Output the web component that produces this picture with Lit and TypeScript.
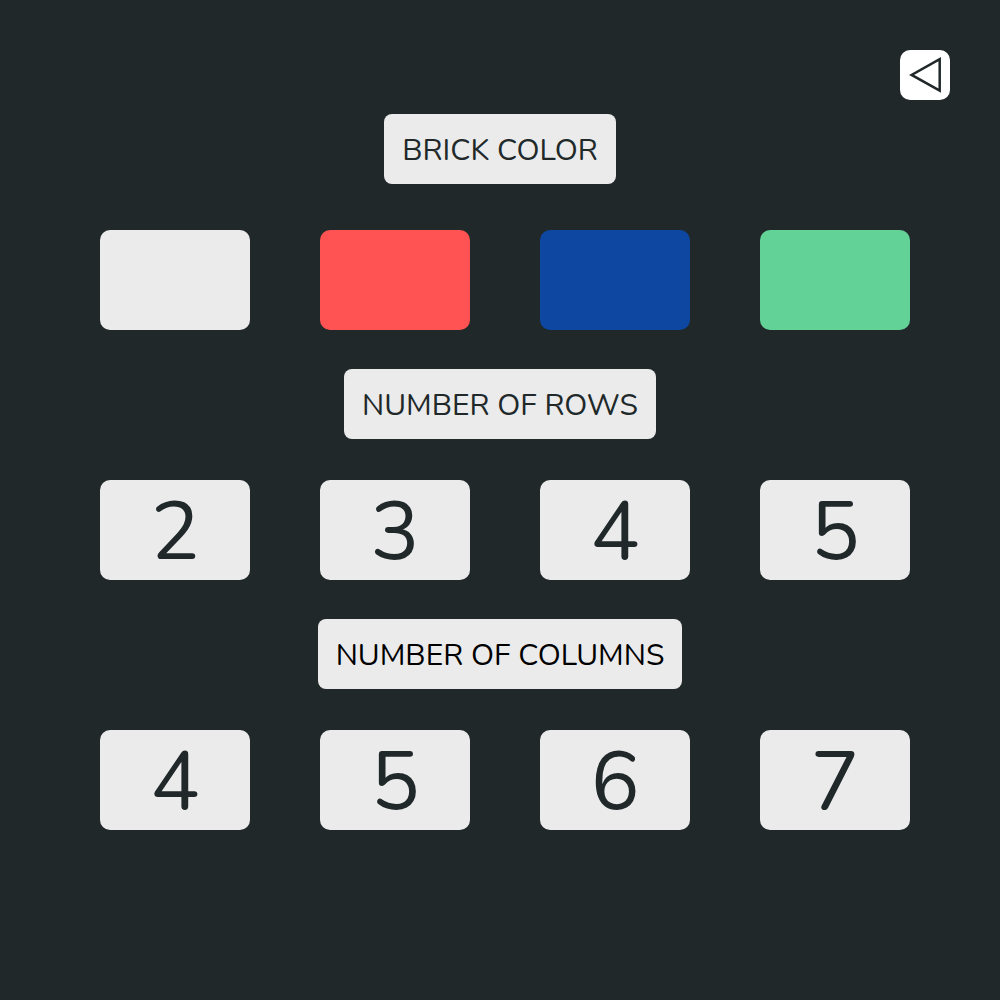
import { LitElement, html, css } from "lit";
import { customElement, property, state } from "lit/decorators.js";
import { styleMap } from "lit/directives/style-map.js";

interface Option {
  name: string;
  text?: string;
  color?: string;
}

const BRICK_COLORS: Option[] = [
  { name: "White", color: "#ebebeb" },
  { name: "Red", color: "#ff5252" },
  { name: "Blue", color: "#0d47a1" },
  { name: "Green", color: "#63d297" },
];

const numbers = (values: number[]): Option[] =>
  values.map((value) => ({ name: String(value), text: String(value) }));

/** A titled row of choices. */
@customElement("option-group")
export class OptionGroup extends LitElement {
  @property() heading = "";
  @property({ attribute: false }) options: Option[] = [];

  static styles = css`
    :host {
      display: flex;
      flex-direction: column;
      align-items: center;
      gap: var(--group-gap, 41px);
    }
    .heading {
      box-sizing: border-box;
      margin: 0;
      padding: 17px 18px 13px;
      border-radius: 8px;
      background: #ebebeb;
      color: var(--heading-color, #202829);
      font-size: 30px;
      font-weight: 400;
      line-height: 40px;
      text-align: center;
    }
    .options {
      box-sizing: border-box;
      width: 100%;
      padding: 0 9% 0 10%;
      display: grid;
      grid-template-columns: repeat(4, 1fr);
      gap: 7vw;
    }
    .option {
      box-sizing: border-box;
      height: 100px;
      padding: 4px 0 0;
      border: 0;
      border-radius: 10px;
      background: #ebebeb;
      color: #202829;
      font: inherit;
      font-size: 82px;
      line-height: 96px;
      cursor: pointer;
    }
  `;

  private choose(option: Option) {
    this.dispatchEvent(new CustomEvent("choose", { detail: option.name }));
  }

  render() {
    return html`
      <h2 class="heading">${this.heading}</h2>
      <div class="options" role="group" aria-label=${this.heading}>
        ${this.options.map(
          (option) => html`<button
            class="option"
            type="button"
            aria-label=${option.name}
            style=${styleMap(option.color ? { background: option.color } : {})}
            @click=${() => this.choose(option)}
          >${option.text ?? ""}</button>`
        )}
      </div>
    `;
  }
}

@customElement("app-root")
export class AppRoot extends LitElement {
  @state() private brickColor = "White";
  @state() private rows = "2";
  @state() private columns = "4";

  static styles = css`
    :host {
      display: block;
      box-sizing: border-box;
      min-height: 100vh;
      padding: 50px 0;
      background: #202829;
      font-family: Nunito, Lato, "Open Sans", sans-serif;
    }
    .toolbar {
      display: flex;
      justify-content: flex-end;
      padding: 0 50px 14px;
    }
    .back {
      width: 50px;
      height: 50px;
      padding: 0;
      border: 0;
      border-radius: 10px;
      background: #fff;
      cursor: pointer;
    }
    .icon {
      display: block;
    }
    .settings {
      display: flex;
      flex-direction: column;
      gap: 39px;
    }
    .colors {
      --group-gap: 46px;
    }
    .columns {
      --heading-color: #000;
    }
  `;

  render() {
    return html`
      <header class="toolbar">
        <button class="back" type="button" aria-label="Back">
          <svg class="icon" width="50" height="50" viewBox="0 0 50 50" aria-hidden="true">
            <path d="M39.7 9.2V40.6L11.6 24.9Z" fill="none" stroke="#202829" stroke-width="2.5" />
          </svg>
        </button>
      </header>
      <main class="settings">
        <option-group
          class="colors"
          heading="BRICK COLOR"
          .options=${BRICK_COLORS}
          @choose=${(e: CustomEvent<string>) => (this.brickColor = e.detail)}
        ></option-group>
        <option-group
          heading="NUMBER OF ROWS"
          .options=${numbers([2, 3, 4, 5])}
          @choose=${(e: CustomEvent<string>) => (this.rows = e.detail)}
        ></option-group>
        <option-group
          class="columns"
          heading="NUMBER OF COLUMNS"
          .options=${numbers([4, 5, 6, 7])}
          @choose=${(e: CustomEvent<string>) => (this.columns = e.detail)}
        ></option-group>
      </main>
    `;
  }
}
